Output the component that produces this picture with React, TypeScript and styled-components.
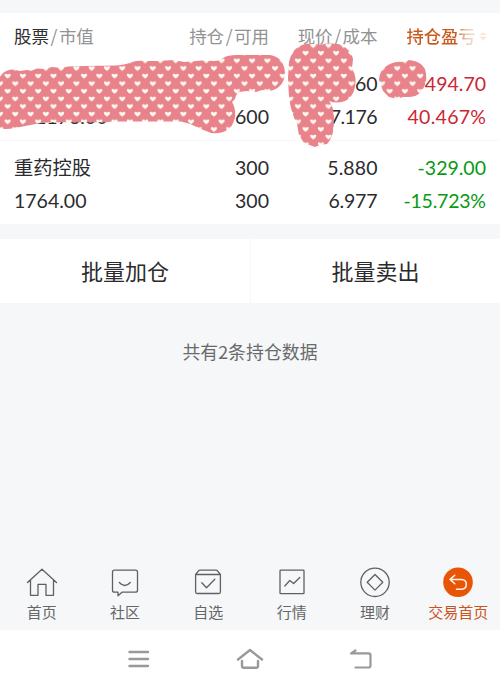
import React from 'react';
import styled, { createGlobalStyle } from 'styled-components';

const GlobalStyle = createGlobalStyle`
  * { box-sizing: border-box; }
  body {
    margin: 0;
    background: #f6f7f9;
    font-family: Lato, "Noto Sans CJK SC", sans-serif;
    color: #2b2b2d;
  }
`;

const Screen = styled.main`
  display: flex;
  flex-direction: column;
  width: 500px;
  height: 687px;
  overflow: hidden;
  background: #f6f7f9;
`;

const Holdings = styled.section`
  position: relative;
  height: 211px;
  margin-top: 13px;
  background: #fff;
`;

const Columns = styled.div`
  display: grid;
  grid-template-columns: 145px 110px 108.5px 108.5px;
  padding-left: 14px;
`;

const HeaderRow = styled(Columns)`
  height: 54px;
  padding-top: 10px;
  font-size: 17.5px;
  line-height: 26px;
  color: #929292;
  font-family: "Noto Sans CJK SC", sans-serif;
`;

const HeaderCell = styled.div<{ $left?: boolean }>`
  text-align: ${p => (p.$left ? 'left' : 'right')};
  white-space: nowrap;
`;

const Strong = styled.span`
  color: #303030;
`;

const Slash = styled.span`
  padding: 0 1.5px;
`;

const ProfitTitle = styled.div`
  display: flex;
  align-items: center;
  padding-left: 29px;
  height: 26px;
  font-weight: 500;
  font-size: 17.3px;
  white-space: nowrap;
  color: transparent;
  background: linear-gradient(90deg, #c85a20 0 78px, #edc5ae 88px, #fdf3ec 105px);
  background-clip: text;
  -webkit-background-clip: text;
`;

const SortMark = styled.svg`
  margin-left: 3px;
  flex: none;
`;

const Position = styled(Columns)<{ $last?: boolean }>`
  height: ${p => (p.$last ? 83 : 74)}px;
  padding-top: ${p => (p.$last ? 10 : 0)}px;
  border-bottom: ${p => (p.$last ? 0 : 1)}px solid #f7f7f9;
`;

const Cell = styled.div<{ $left?: boolean; $tone?: string }>`
  display: flex;
  flex-direction: column;
  align-items: ${p => (p.$left ? 'flex-start' : 'flex-end')};
  font-size: 19.5px;
  line-height: 33.4px;
  white-space: nowrap;
  color: ${p => p.$tone ?? '#2b2b2d'};
`;

const Line = styled.span<{ $track?: number; $indent?: number }>`
  height: 33.4px;
  letter-spacing: ${p => p.$track ?? 0}px;
  margin-right: ${p => -(p.$track ?? 0)}px;
  margin-left: ${p => p.$indent ?? 0}px;
`;

const StockName = styled.span`
  height: 33.4px;
  font-size: 19.3px;
  font-family: "Noto Sans CJK SC", sans-serif;
`;

const Cover = styled.svg`
  position: absolute;
  left: 0;
  top: -13px;
  pointer-events: none;
`;

const Actions = styled.section`
  display: grid;
  grid-template-columns: 1fr 1fr;
  height: 64px;
  margin-top: 15px;
  background: #fff;
`;

const Action = styled.button`
  border: 0;
  padding: 0 0 2px;
  background: none;
  color: #2b2b2d;
  font: 400 22px/32px "Noto Sans CJK SC", sans-serif;
  & + & { border-left: 1px solid #f8f8f9; }
`;

const Summary = styled.p`
  flex: 1;
  margin: 0;
  padding-top: 35px;
  text-align: center;
  font: 400 17.9px/26px "Noto Sans CJK SC", sans-serif;
  color: #6a6a6a;
`;

const Tabs = styled.nav`
  display: grid;
  grid-template-columns: repeat(6, 1fr);
  height: 66px;
`;

const Tab = styled.a<{ $active?: boolean }>`
  display: flex;
  flex-direction: column;
  align-items: center;
  font: 400 15px/22px "Noto Sans CJK SC", sans-serif;
  white-space: nowrap;
  color: ${p => (p.$active ? '#c9541c' : '#666')};
  svg { margin-bottom: 1px; flex: none; }
`;

const SystemBar = styled.footer`
  display: flex;
  justify-content: center;
  gap: 79px;
  height: 57px;
  padding-top: 13px;
  background: #fff;
`;

const HEART = 'M0 2.7 C-1.2 1.7-3.1.5-3.1-.9 C-3.1-2.5-1-2.7 0-1.2 C1-2.7 3.1-2.5 3.1-.9 C3.1.5 1.2 1.7 0 2.7Z';

const HeartCover = () => (
  <Cover width="500" height="160" viewBox="0 0 500 160">
    <defs>
      <pattern id="hearts" width="15.28" height="15.24" patternUnits="userSpaceOnUse" patternTransform="translate(3.82 -4.1)">
        <rect width="15.28" height="15.24" fill="#e8838b" />
        <path d={HEART} transform="translate(11.46 11.43)" fill="#fffaf2" />
        <path d={HEART} transform="translate(3.82 3.81)" fill="#fffaf2" />
      </pattern>
    </defs>
    <g fill="url(#hearts)">
      <path d="M-1 78 L3 73 Q8 69 14 69.500 L20 71 L27 70 L32 70.500 L37 68.500 L45 69 L52 67 L62 68 L68 66.500 L84 66 L116 65.500 Q126 64.500 132 62 Q138 60 146 61 L158 61 L174 60 L184 62 L202 60.500 L214 61 Q220 61 223 58 Q227 55 237 55 L270 55 Q284 57 285 73 Q284 88 270 91 L262 90 L256 92 L246 91 L239 92 Q236 94 235 99 L232 102 Q236 108 235 118 Q232 128 227 130 Q221 134 211 133 L201 129 L190 124 L181 121.500 L112 121.500 L106 122.300 L50 122.300 L38 123.500 L15 128 Q5 130 -1 128Z" />
      <path d="M289 62 Q291 52 298 47 Q306 42 315 44 L321 45 L327 43 L338 44 L344 46 L348 50 L351 52 L353 59 L352 69 Q357 76 355 87 Q353 97 345 101 Q336 104 329 101 Q334 107 334 118 Q334 134 330 140 L327 144 L320 145 L315 147 L304 143 L299 135 L297 124 Q291 113 289 97 L288 78Z" />
      <path d="M379 80 Q379 70 388 65 Q396 61 402 62 L409 60 Q421 61 425 69 Q428 79 424 87 Q420 96 411 97 L403 97 L397 99 L389 97 L383 91Z" />
    </g>
  </Cover>
);

const line = { fill: 'none', stroke: '#5e6064', strokeWidth: 1.3, strokeLinejoin: 'round' as const, strokeLinecap: 'round' as const };

const HomeIcon = () => (
  <svg width="36" height="36" viewBox="0 0 36 36" {...line}>
    <path d="M3.500 18.500 18 5.200 32.500 18.500M6.500 16V31.300H14V20.300H22V31.300H29.500V16" />
  </svg>
);
const CommunityIcon = () => (
  <svg width="36" height="36" viewBox="0 0 36 36" {...line}>
    <path d="M7.500 6.200H28.500Q30.500 6.200 30.500 8.200V26.200Q30.500 28.200 28.500 28.200H15L11 31.800V28.200H7.500Q5.500 28.200 5.500 26.200V8.200Q5.500 6.200 7.500 6.200ZM12.300 18.500Q17.800 24.500 23.300 18.500" />
  </svg>
);
const WatchIcon = () => (
  <svg width="36" height="36" viewBox="0 0 36 36" {...line}>
    <path d="M5.600 10.500H30.400V28Q30.400 29.500 29 29.500H7Q5.600 29.500 5.600 28ZM5.600 10.500 8.500 6.800Q9 6.200 10 6.200H26Q27 6.200 27.500 6.800L30.400 10.500M11.800 18.700 16.500 23.800 24.800 15.300" />
  </svg>
);
const MarketIcon = () => (
  <svg width="36" height="36" viewBox="0 0 36 36" {...line}>
    <rect x="6" y="6.200" width="24" height="23.500" rx=".8" />
    <path d="M10.800 22 15.800 16.500 19.600 19.500 25.800 13.500" />
  </svg>
);
const WealthIcon = () => (
  <svg width="36" height="36" viewBox="0 0 36 36" {...line}>
    <circle cx="18" cy="18.300" r="14.200" />
    <path d="M18 10.500 25.800 18.300 18 26.100 10.200 18.300Z" />
  </svg>
);
const TradeIcon = () => (
  <svg width="36" height="36" viewBox="0 0 36 36" fill="none">
    <circle cx="18" cy="18.200" r="14.800" fill="#e95506" />
    <path d="M14.800 11.200 10 15.400 14.800 19.700M10.300 15.400H21.500Q26.300 15.600 26.300 20.300Q26.300 25.200 21.500 25.200H16.500" stroke="#fff5eb" strokeWidth="1.500" strokeLinecap="round" strokeLinejoin="round" />
  </svg>
);

const tabs = [
  { label: '首页', Icon: HomeIcon },
  { label: '社区', Icon: CommunityIcon },
  { label: '自选', Icon: WatchIcon },
  { label: '行情', Icon: MarketIcon },
  { label: '理财', Icon: WealthIcon },
  { label: '交易首页', Icon: TradeIcon, active: true },
];

export default function App() {
  return (
    <>
      <GlobalStyle />
      <Screen>
        <Holdings>
          <HeaderRow>
            <HeaderCell $left><Strong>股票</Strong><Slash>/</Slash>市值</HeaderCell>
            <HeaderCell>持仓<Slash>/</Slash>可用</HeaderCell>
            <HeaderCell>现价<Slash>/</Slash>成本</HeaderCell>
            <ProfitTitle>
              持仓盈亏
              <SortMark width="8" height="9" viewBox="0 0 8 9"><path d="M0 3 4 0 8 3ZM0 4.500H8L4 9Z" fill="#fbe7dc" /></SortMark>
            </ProfitTitle>
          </HeaderRow>
          <Position>
            <Cell $left><Line>&nbsp;</Line><Line $indent={21}>1176.00</Line></Cell>
            <Cell><Line>&nbsp;</Line><Line>600</Line></Cell>
            <Cell><Line>60</Line><Line $track={-0.5}>7.176</Line></Cell>
            <Cell $tone="#cb2634"><Line>494.70</Line><Line $track={0.3}>40.467%</Line></Cell>
          </Position>
          <Position $last>
            <Cell $left><StockName>重药控股</StockName><Line>1764.00</Line></Cell>
            <Cell><Line>300</Line><Line>300</Line></Cell>
            <Cell><Line $track={0.1}>5.880</Line><Line $track={-0.2}>6.977</Line></Cell>
            <Cell $tone="#079a12"><Line>-329.00</Line><Line $track={-0.2}>-15.723%</Line></Cell>
          </Position>
          <HeartCover />
        </Holdings>
        <Actions>
          <Action>批量加仓</Action>
          <Action>批量卖出</Action>
        </Actions>
        <Summary>共有2条持仓数据</Summary>
        <Tabs>
          {tabs.map(({ label, Icon, active }) => (
            <Tab key={label} $active={active}><Icon />{label}</Tab>
          ))}
        </Tabs>
        <SystemBar>
          <svg width="32" height="32" viewBox="0 0 32 32" fill="none" stroke="#999" strokeWidth="2.400" strokeLinecap="round">
            <path d="M6.500 9H25M6.500 16H25M6.500 23H25" />
          </svg>
          <svg width="32" height="32" viewBox="0 0 32 32" fill="none" stroke="#999" strokeWidth="2.400" strokeLinecap="round" strokeLinejoin="round">
            <path d="M4 16.500 16 7 28 16.500M8 18V23Q8 24.800 10 24.800H22Q24 24.800 24 23V18" />
          </svg>
          <svg width="32" height="32" viewBox="0 0 32 32" fill="none" stroke="#999" strokeWidth="2.200" strokeLinecap="round" strokeLinejoin="round">
            <path d="M10.500 7.500 6 10.400H23.500Q25.500 10.400 25.500 12.400V22.500Q25.500 24.500 23.500 24.500H10.500" />
          </svg>
        </SystemBar>
      </Screen>
    </>
  );
}
